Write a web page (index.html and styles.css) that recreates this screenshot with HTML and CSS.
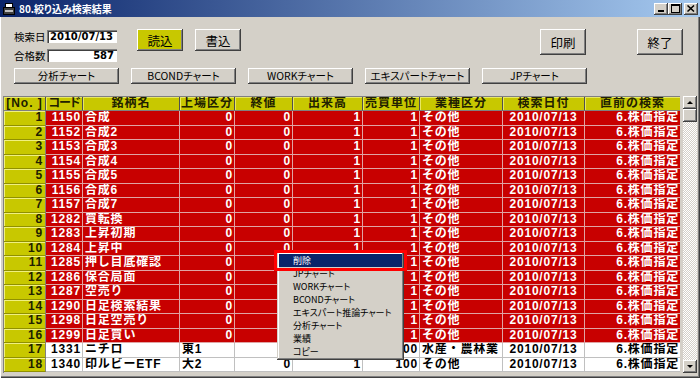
FILE: index.html
```html
<!DOCTYPE html>
<html lang="ja">
<head>
    <meta charset="UTF-8">
    <meta name="viewport" content="width=device-width, initial-scale=1.0">
    <title>80.絞り込み検索結果</title>
    <link rel="stylesheet" href="styles.css">
</head>
<body>
<div class="window">
    <div class="titlebar">
        <svg class="app-icon" width="12" height="12" viewBox="0 0 12 12">
            <rect x="0.5" y="4.5" width="11" height="7" fill="#404040" stroke="#000"/>
            <rect x="2.5" y="0.5" width="7" height="4" fill="#fff" stroke="#000"/>
            <rect x="2" y="7" width="8" height="2" fill="#c0c0c0"/>
        </svg>
        <span class="title">80.絞り込み検索結果</span>
        <div class="win-buttons">
            <span class="win-btn"><svg width="8" height="7" viewBox="0 0 8 7"><rect x="1" y="5" width="6" height="2" fill="#000"/></svg></span>
            <span class="win-btn"><svg width="9" height="9" viewBox="0 0 9 9"><rect x="0.5" y="0.5" width="8" height="8" fill="none" stroke="#000"/><rect x="0" y="0" width="9" height="2" fill="#000"/></svg></span>
            <span class="win-btn close"><svg width="8" height="7" viewBox="0 0 8 7"><path d="M0.5 0.5 L7 6.5 M7 0.5 L0.5 6.5" stroke="#000" stroke-width="1.5"/></svg></span>
        </div>
    </div>

    <div class="content">
        <div class="toolbar">
            <div class="fields">
                <div class="field"><span class="field-label">検索日</span><span class="field-box">2010/07/13</span></div>
                <div class="field"><span class="field-label">合格数</span><span class="field-box right">587</span></div>
            </div>
            <button class="btn btn-load">読込</button>
            <button class="btn btn-save">書込</button>
            <button class="btn btn-big btn-print">印刷</button>
            <button class="btn btn-big btn-exit">終了</button>
        </div>

        <div class="chart-bar">
            <button class="chart-btn">分析チャート</button>
            <button class="chart-btn">BCONDチャート</button>
            <button class="chart-btn">WORKチャート</button>
            <button class="chart-btn">エキスパートチャート</button>
            <button class="chart-btn">JPチャート</button>
        </div>

        <div class="grid-area">
            <div class="grid">
                <div class="row head">
                    <span>[No. ]</span><span class="tight">コード</span><span>銘柄名</span><span>上場区分</span><span>終値</span><span>出来高</span><span>売買単位</span><span>業種区分</span><span>検索日付</span><span>直前の検索</span>
                </div>
                <div class="row hit"><span class="no">1</span><span class="num">1150</span><span class="txt">合成</span><span class="num">0</span><span class="num">0</span><span class="num">1</span><span class="num">1</span><span class="txt">その他</span><span class="mid">2010/07/13</span><span class="num">6.株価指定</span></div>
                <div class="row hit"><span class="no">2</span><span class="num">1152</span><span class="txt">合成2</span><span class="num">0</span><span class="num">0</span><span class="num">1</span><span class="num">1</span><span class="txt">その他</span><span class="mid">2010/07/13</span><span class="num">6.株価指定</span></div>
                <div class="row hit"><span class="no">3</span><span class="num">1153</span><span class="txt">合成3</span><span class="num">0</span><span class="num">0</span><span class="num">1</span><span class="num">1</span><span class="txt">その他</span><span class="mid">2010/07/13</span><span class="num">6.株価指定</span></div>
                <div class="row hit"><span class="no">4</span><span class="num">1154</span><span class="txt">合成4</span><span class="num">0</span><span class="num">0</span><span class="num">1</span><span class="num">1</span><span class="txt">その他</span><span class="mid">2010/07/13</span><span class="num">6.株価指定</span></div>
                <div class="row hit"><span class="no">5</span><span class="num">1155</span><span class="txt">合成5</span><span class="num">0</span><span class="num">0</span><span class="num">1</span><span class="num">1</span><span class="txt">その他</span><span class="mid">2010/07/13</span><span class="num">6.株価指定</span></div>
                <div class="row hit"><span class="no">6</span><span class="num">1156</span><span class="txt">合成6</span><span class="num">0</span><span class="num">0</span><span class="num">1</span><span class="num">1</span><span class="txt">その他</span><span class="mid">2010/07/13</span><span class="num">6.株価指定</span></div>
                <div class="row hit"><span class="no">7</span><span class="num">1157</span><span class="txt">合成7</span><span class="num">0</span><span class="num">0</span><span class="num">1</span><span class="num">1</span><span class="txt">その他</span><span class="mid">2010/07/13</span><span class="num">6.株価指定</span></div>
                <div class="row hit"><span class="no">8</span><span class="num">1282</span><span class="txt">買転換</span><span class="num">0</span><span class="num">0</span><span class="num">1</span><span class="num">1</span><span class="txt">その他</span><span class="mid">2010/07/13</span><span class="num">6.株価指定</span></div>
                <div class="row hit"><span class="no">9</span><span class="num">1283</span><span class="txt">上昇初期</span><span class="num">0</span><span class="num">0</span><span class="num">1</span><span class="num">1</span><span class="txt">その他</span><span class="mid">2010/07/13</span><span class="num">6.株価指定</span></div>
                <div class="row hit"><span class="no">10</span><span class="num">1284</span><span class="txt">上昇中</span><span class="num">0</span><span class="num">0</span><span class="num">1</span><span class="num">1</span><span class="txt">その他</span><span class="mid">2010/07/13</span><span class="num">6.株価指定</span></div>
                <div class="row hit"><span class="no">11</span><span class="num">1285</span><span class="txt">押し目底確認</span><span class="num">0</span><span class="num">0</span><span class="num">1</span><span class="num">1</span><span class="txt">その他</span><span class="mid">2010/07/13</span><span class="num">6.株価指定</span></div>
                <div class="row hit"><span class="no">12</span><span class="num">1286</span><span class="txt">保合局面</span><span class="num">0</span><span class="num">0</span><span class="num">1</span><span class="num">1</span><span class="txt">その他</span><span class="mid">2010/07/13</span><span class="num">6.株価指定</span></div>
                <div class="row hit"><span class="no">13</span><span class="num">1287</span><span class="txt">空売り</span><span class="num">0</span><span class="num">0</span><span class="num">1</span><span class="num">1</span><span class="txt">その他</span><span class="mid">2010/07/13</span><span class="num">6.株価指定</span></div>
                <div class="row hit"><span class="no">14</span><span class="num">1290</span><span class="txt">日足検索結果</span><span class="num">0</span><span class="num">0</span><span class="num">1</span><span class="num">1</span><span class="txt">その他</span><span class="mid">2010/07/13</span><span class="num">6.株価指定</span></div>
                <div class="row hit"><span class="no">15</span><span class="num">1298</span><span class="txt">日足空売り</span><span class="num">0</span><span class="num">0</span><span class="num">1</span><span class="num">1</span><span class="txt">その他</span><span class="mid">2010/07/13</span><span class="num">6.株価指定</span></div>
                <div class="row hit"><span class="no">16</span><span class="num">1299</span><span class="txt">日足買い</span><span class="num">0</span><span class="num">0</span><span class="num">1</span><span class="num">1</span><span class="txt">その他</span><span class="mid">2010/07/13</span><span class="num">6.株価指定</span></div>
                <div class="row"><span class="no">17</span><span class="num">1331</span><span class="txt">ニチロ</span><span class="txt">東1</span><span class="num"></span><span class="num"></span><span class="num">100</span><span class="txt">水産・農林業</span><span class="mid">2010/07/13</span><span class="num">6.株価指定</span></div>
                <div class="row"><span class="no">18</span><span class="num">1340</span><span class="txt">印ルビーETF</span><span class="txt">大2</span><span class="num">0</span><span class="num">1</span><span class="num">100</span><span class="txt">その他</span><span class="mid">2010/07/13</span><span class="num">6.株価指定</span></div>
            </div>
            <div class="scrollbar">
                <span class="sb-btn sb-up"></span>
                <span class="sb-thumb"></span>
                <span class="sb-track"></span>
                <span class="sb-btn sb-down"></span>
            </div>
        </div>
    </div>

    <div class="context-menu">
        <div class="menu-item active">削除</div>
        <div class="menu-item">JPチャート</div>
        <div class="menu-item">WORKチャート</div>
        <div class="menu-item">BCONDチャート</div>
        <div class="menu-item">エキスパート推論チャート</div>
        <div class="menu-item">分析チャート</div>
        <div class="menu-item">業績</div>
        <div class="menu-item">コピー</div>
    </div>
    <div class="menu-mark"></div>
</div>
</body>
</html>
```

FILE: styles.css
```css
body {
    margin: 0;
    font-family: "Noto Sans CJK JP", sans-serif;
    font-feature-settings: "palt";
    background: #d4d0c8;
}
.window {
    position: relative;
    width: 700px;
    height: 378px;
    box-sizing: border-box;
    display: flex;
    flex-direction: column;
    overflow: hidden;
    background: #d4d0c8;
    box-shadow: inset 1px 0 #ffffff, inset -1px -1px #404040, inset -2px -2px #808080;
}

/* title bar */
.titlebar {
    height: 17px;
    flex: none;
    display: flex;
    align-items: center;
    padding: 0 2px 0 3px;
    background: linear-gradient(to right, #0a246a, #a6caf0);
}
.app-icon {
    flex: none;
}
.title {
    margin-left: 4px;
    color: #fff;
    font-size: 10px;
    font-weight: bold;
    line-height: 17px;
}
.win-buttons {
    margin-left: auto;
    display: flex;
}
.win-btn {
    width: 14px;
    height: 12px;
    box-sizing: border-box;
    display: flex;
    align-items: center;
    justify-content: center;
    background: #d4d0c8;
    box-shadow: inset -1px -1px #404040, inset 1px 1px #fff, inset -2px -2px #808080;
}
.win-btn.close {
    margin-left: 2px;
}

/* top controls */
.content {
    flex: 1;
    display: flex;
    flex-direction: column;
    padding: 0 3px 5px 3px;
    min-height: 0;
}
.toolbar {
    display: flex;
    align-items: flex-start;
    padding: 12px 14px 0 11px;
}
.fields {
    margin-top: 1px;
    display: flex;
    flex-direction: column;
    gap: 6px;
}
.field {
    display: flex;
    align-items: center;
    height: 13px;
}
.field-label {
    width: 33px;
    font-size: 10.5px;
    color: #000;
    line-height: 13px;
}
.field-box {
    width: 70px;
    height: 13px;
    box-sizing: border-box;
    padding: 0 3px;
    background: #fff;
    font-family: "DejaVu Sans", sans-serif;
    font-size: 10px;
    font-weight: bold;
    line-height: 13px;
    box-shadow: inset 1px 1px #808080, inset 2px 2px #404040, inset -1px -1px #fff;
}
.field-box.right {
    text-align: right;
}
.btn {
    width: 46px;
    height: 22px;
    padding: 0;
    border: none;
    font-family: "Noto Sans CJK JP", sans-serif;
    font-size: 12.5px;
    color: #000;
    background: #d4d0c8;
    box-shadow: inset -1px -1px #404040, inset 1px 1px #fff, inset -2px -2px #808080;
}
.btn-load {
    margin-left: 20px;
    background: #c8c800;
}
.btn-save {
    margin-left: 12px;
}
.btn-big {
    height: 26px;
}
.btn-print {
    margin-left: auto;
}
.btn-exit {
    margin-left: 51px;
}

.chart-bar {
    display: flex;
    gap: 12px;
    margin-top: 6px;
    padding-left: 11px;
}
.chart-btn {
    width: 105px;
    height: 16px;
    padding: 0;
    border: none;
    font-family: "Noto Sans CJK JP", sans-serif;
    font-feature-settings: "palt";
    font-size: 10.5px;
    line-height: 16px;
    color: #000;
    background: #d4d0c8;
    box-shadow: inset -1px -1px #404040, inset 1px 1px #fff, inset -2px -2px #808080;
}

/* grid */
.grid-area {
    flex: 1;
    min-height: 0;
    margin-top: 12px;
    display: flex;
    gap: 3px;
}
.grid {
    width: 678px;
    overflow: hidden;
    border-top: 1px solid #808080;
    border-left: 1px solid #808080;
    box-sizing: border-box;
    font-family: "Liberation Sans", "Noto Sans CJK JP", sans-serif;
    font-feature-settings: normal;
    font-size: 12px;
    font-weight: bold;
    letter-spacing: 0.8px;
}
.row {
    display: grid;
    grid-template-columns: 42px 37px 97px 55px 58px 70px 57px 83px 82px 96px;
    height: 14.5px;
    background: #fff;
    color: #000;
}
.row > span {
    box-sizing: border-box;
    border-right: 1px solid #c0c0c0;
    border-bottom: 1px solid #c0c0c0;
    white-space: nowrap;
    overflow: hidden;
    line-height: 13.5px;
}
.row.hit {
    background: #c80000;
    color: #fff;
}
.row.hit > span {
    border-color: #e0a4a4;
}
.row.head {
    height: 14px;
    background: #c8c800;
    color: #202000;
}
.row.head > span {
    text-align: center;
    line-height: 13px;
    letter-spacing: 1px;
    border-right-color: #505050;
    border-bottom-color: #808080;
    box-shadow: inset 1px 1px #e8e860;
}
.row.head > .tight {
    letter-spacing: -1px;
    font-feature-settings: "palt";
}
.row > .no,
.row.hit > .no {
    background: #c8c800;
    color: #202000;
    text-align: right;
    padding-right: 2px;
    border-right-color: #808080;
    border-bottom-color: #909000;
    box-shadow: inset 1px 1px #f0f080;
}
.num {
    text-align: right;
    padding-right: 1px;
}
.txt {
    padding-left: 2px;
}
.mid {
    text-align: center;
}

/* scrollbar */
.scrollbar {
    width: 14px;
    display: flex;
    flex-direction: column;
}
.sb-btn,
.sb-thumb {
    height: 13px;
    flex: none;
    position: relative;
    background: #d4d0c8;
    box-shadow: inset -1px -1px #404040, inset 1px 1px #fff, inset -2px -2px #808080;
}
.sb-track {
    flex: 1;
    background: repeating-conic-gradient(#ffffff 0 25%, #d4d0c8 0 50%) 0 0 / 2px 2px;
}
.sb-btn::after {
    content: '';
    position: absolute;
    left: 4px;
    top: 5px;
    border-left: 3px solid transparent;
    border-right: 3px solid transparent;
}
.sb-up::after {
    border-bottom: 3px solid #000;
}
.sb-down::after {
    border-top: 3px solid #000;
}

/* context menu */
.context-menu {
    position: absolute;
    left: 277px;
    top: 252px;
    width: 127px;
    box-sizing: border-box;
    padding: 2px;
    background: #d4d0c8;
    box-shadow: inset -1px -1px #404040, inset 1px 1px #d4d0c8, inset -2px -2px #808080, inset 2px 2px #fff;
}
.menu-item {
    height: 13px;
    padding-left: 14px;
    font-size: 9px;
    line-height: 13px;
    color: #000;
    white-space: nowrap;
}
.menu-item.active {
    background: #0a246a;
    color: #fff;
}
.menu-mark {
    position: absolute;
    left: 274px;
    top: 250px;
    width: 133px;
    height: 21px;
    box-sizing: border-box;
    border: 3px solid #ff0000;
}
```
